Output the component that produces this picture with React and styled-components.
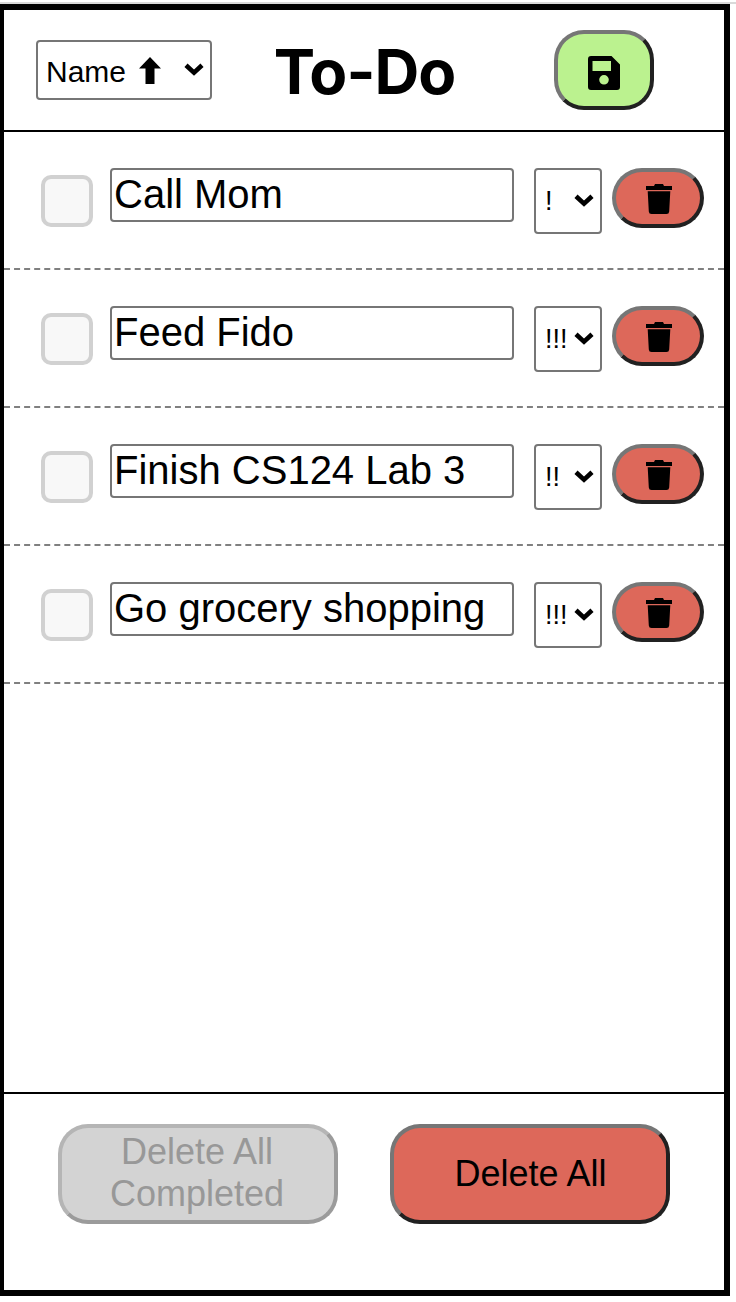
import React from "react";
import styled, { createGlobalStyle } from "styled-components";

const GlobalStyle = createGlobalStyle`
  *, *::before, *::after { box-sizing: border-box; }
  body { margin: 0; background: #fff; color: #000; font-family: "Liberation Sans", Arial, sans-serif; }
`;

const Page = styled.div`
  height: 1302px;
  padding-top: 2px;
`;

const TopRule = styled.div`
  height: 2px;
  background: #d9d9d9;
`;

const Frame = styled.div`
  display: flex;
  flex-direction: column;
  width: 730px;
  height: 1292px;
  border: 6px solid #000;
  border-left-width: 4px;
`;

const Header = styled.header`
  display: flex;
  align-items: center;
  height: 122px;
  padding-left: 32px;
  border-bottom: 2px solid #000;
`;

const Title = styled.h1`
  width: 342px;
  margin: 0;
  padding: 3px 37px 0 0;
  text-align: center;
  white-space: nowrap;
  font: 700 62px/80px Inter, sans-serif;
  letter-spacing: -1px;
`;

const SelectBox = styled.div`
  display: flex;
  flex: none;
  align-items: center;
  justify-content: space-between;
  width: ${(p) => p.$width}px;
  height: ${(p) => p.$height}px;
  padding: 0 6px 0 8px;
  border: 2px solid #767676;
  border-radius: 4px;
  background: #fff;
  font-size: ${(p) => p.$font}px;
  line-height: 32px;
`;

const SortValue = styled.span`
  display: flex;
  align-items: center;
  gap: 13px;
`;

const SortName = styled.span`
  padding-top: 4px;
`;

const PriorityValue = styled.span`
  padding-left: 1px;
`;

const Button = styled.button`
  display: flex;
  flex: none;
  align-items: center;
  justify-content: center;
  width: ${(p) => p.$width}px;
  height: ${(p) => p.$height}px;
  padding: ${(p) => p.$padding || "0"};
  border: 4px solid;
  border-color: #767676 #212121 #212121 #767676;
  border-radius: 30px;
  background: ${(p) => p.$color};
  color: #000;
  font: 36px/42px "Liberation Sans", Arial, sans-serif;

  &:disabled {
    border-color: #b5b5b5 #9b9b9b #9b9b9b #b5b5b5;
    color: #989898;
  }
`;

const List = styled.main`
  flex: 1;
`;

const Item = styled.div`
  display: flex;
  align-items: flex-start;
  height: 138px;
  padding: 36px 20px 0 37px;
  border-bottom: 2px dashed #808080;
`;

const Checkbox = styled.div`
  width: 52px;
  height: 52px;
  margin: 7px 17px 0 0;
  border: 4px solid #d1d1d1;
  border-radius: 10px;
  background: #f8f8f8;
`;

const TextField = styled.div`
  width: 404px;
  height: 54px;
  margin-right: 20px;
  padding-left: 2px;
  border: 2px solid #767676;
  border-radius: 4px;
  font-size: 40px;
  line-height: 49px;
  white-space: nowrap;
`;

const DeleteSlot = styled.div`
  margin-left: 10px;
`;

const Footer = styled.footer`
  display: flex;
  gap: 52px;
  height: 198px;
  padding: 30px 0 0 54px;
  border-top: 2px solid #000;
`;

const Chevron = () => (
  <svg width="20" height="14" viewBox="0 0 20 14" fill="none" stroke="#000" strokeWidth="4.6">
    <path d="M2 2.300 10 9.700 18 2.300" />
  </svg>
);

const ArrowUp = () => (
  <svg width="22" height="27" viewBox="0 0 22 27">
    <path d="M11 0 22 11.500H15.500V27H6.500V11.500H0Z" />
  </svg>
);

const SaveIcon = () => (
  <svg width="32" height="34" viewBox="0 0 32 34">
    <path
      fillRule="evenodd"
      d="M3 0H23.500L32 8.500V31Q32 34 29 34H3Q0 34 0 31V3Q0 0 3 0ZM4.500 5V15H23V5ZM16 19A4.800 4.800 0 1 0 16 28.600A4.800 4.800 0 1 0 16 19Z"
    />
  </svg>
);

const TrashIcon = () => (
  <svg width="26" height="30" viewBox="0 0 26 30">
    <path d="M0 2H8L9 0H17L18 2H26V6H0ZM1.700 7.200H24.300L23.200 27.500Q23 30 20.500 30H5.500Q3 30 2.800 27.500Z" />
  </svg>
);

const tasks = [
  { name: "Call Mom", priority: "!" },
  { name: "Feed Fido", priority: "!!!" },
  { name: "Finish CS124 Lab 3", priority: "!!" },
  { name: "Go grocery shopping", priority: "!!!" },
];

export default function App() {
  return (
    <Page>
      <GlobalStyle />
      <TopRule />
      <Frame>
        <Header>
          <SelectBox $width={176} $height={60} $font={30}>
            <SortValue>
              <SortName>Name</SortName>
              <ArrowUp />
            </SortValue>
            <Chevron />
          </SelectBox>
          <Title>To-Do</Title>
          <Button $width={100} $height={80} $padding="6px 0 0" $color="#bbf28f" aria-label="Save">
            <SaveIcon />
          </Button>
        </Header>
        <List>
          {tasks.map((task) => (
            <Item key={task.name}>
              <Checkbox />
              <TextField>{task.name}</TextField>
              <SelectBox $width={68} $height={66} $font={27}>
                <PriorityValue>{task.priority}</PriorityValue>
                <Chevron />
              </SelectBox>
              <DeleteSlot>
                <Button $width={92} $height={60} $padding="2px 0 0 2px" $color="#dd685a" aria-label="Delete">
                  <TrashIcon />
                </Button>
              </DeleteSlot>
            </Item>
          ))}
        </List>
        <Footer>
          <Button $width={280} $height={100} $padding="0 2px 2px 0" $color="#d3d3d3" disabled>
            Delete All
            <br />
            Completed
          </Button>
          <Button $width={280} $height={100} $padding="0 0 0 1px" $color="#dd685a">
            Delete All
          </Button>
        </Footer>
      </Frame>
    </Page>
  );
}
